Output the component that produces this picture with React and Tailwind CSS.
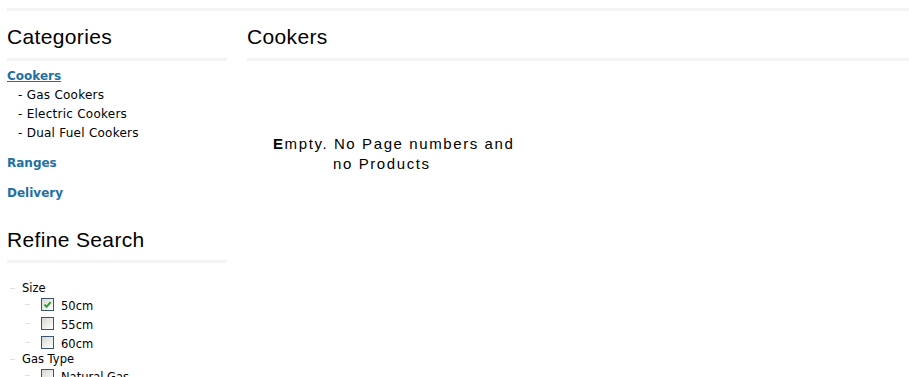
import React from "react";

const categories = [
  { name: "Cookers", active: true, children: ["Gas Cookers", "Electric Cookers", "Dual Fuel Cookers"] },
  { name: "Ranges" },
  { name: "Delivery" },
];

const filters = [
  { name: "Size", options: [{ label: "50cm", checked: true }, { label: "55cm" }, { label: "60cm" }] },
  { name: "Gas Type", options: [{ label: "Natural Gas" }, { label: "LPG" }] },
];

function Checkbox({ checked }) {
  return (
    <span className="relative mt-[3px] ml-[11px] w-[13px] h-[13px] shrink-0 border border-[#3a566f] bg-linear-to-br from-[#d8d8d2] to-white">
      {checked && (
        <svg viewBox="0 0 11 11" className="absolute inset-0 w-[11px] h-[11px]">
          <path d="M2.5 5.5 L4.5 7.8 L8.6 3.2" fill="none" stroke="#21a121" strokeWidth="1.9" />
        </svg>
      )}
    </span>
  );
}

function Heading({ children }) {
  return (
    <>
      <h2 className="mt-[14px] text-[21px] leading-[24px] tracking-[0.35px] text-black font-['Liberation_Sans',Arial,sans-serif]">
        {children}
      </h2>
      <div className="mt-[9px] h-[3px] bg-[#f4f4f4]" />
    </>
  );
}

export default function App() {
  return (
    <div className="w-[909px] h-[377px] overflow-hidden bg-white text-black">
      <div className="mt-[8px] ml-[7px] h-[3px] bg-[#f4f4f4]" />
      <div className="flex">
        <aside className="ml-[7px] w-[220px] shrink-0 font-['DejaVu_Sans',Verdana,sans-serif]">
          <Heading>Categories</Heading>
          <ul className="mt-[6px]">
            {categories.map((c, i) => (
              <li key={c.name} className={i === 0 ? "" : "mt-[11px]"}>
                <a
                  href="#"
                  className={`block text-[12px] leading-[19px] font-bold text-[#1d6fa5] ${c.active ? "underline" : "no-underline"}`}
                >
                  {c.name}
                </a>
                {c.children && (
                  <ul>
                    {c.children.map((s) => (
                      <li key={s} className="pl-[11px] text-[12px] leading-[19px] tracking-[0.25px]">
                        - {s}
                      </li>
                    ))}
                  </ul>
                )}
              </li>
            ))}
          </ul>

          <h2 className="mt-[25px] text-[21px] leading-[24px] tracking-[0.35px] font-['Liberation_Sans',Arial,sans-serif]">
            Refine Search
          </h2>
          <div className="mt-[8px] h-[3px] bg-[#f4f4f4]" />

          <ul className="mt-[18px] text-[11.5px]">
            {filters.map((f) => (
              <li key={f.name}>
                <div className="flex items-center h-[14px] leading-[14px]">
                  <span className="ml-[3px] w-[5px] h-px bg-[#dedede]" />
                  <span className="ml-[7px]">{f.name}</span>
                </div>
                <ul>
                  {f.options.map((o) => (
                    <li key={o.label} className="flex h-[19px]">
                      <span className="ml-[18px] mt-[9px] w-[5px] h-px bg-[#e2e2e2]" />
                      <Checkbox checked={o.checked} />
                      <span className="ml-[7px] leading-[22px]">{o.label}</span>
                    </li>
                  ))}
                </ul>
              </li>
            ))}
          </ul>
        </aside>

        <main className="ml-[20px] flex-1">
          <Heading>Cookers</Heading>
          <p className="mt-[73px] pl-[86px] [text-indent:-60px] text-[15px] leading-[20px] tracking-[1.6px] font-['Liberation_Sans',Arial,sans-serif]">
            <span className="font-bold">E</span>mpty. No Page numbers and
            <br />
            no Products
          </p>
        </main>
      </div>
    </div>
  );
}
